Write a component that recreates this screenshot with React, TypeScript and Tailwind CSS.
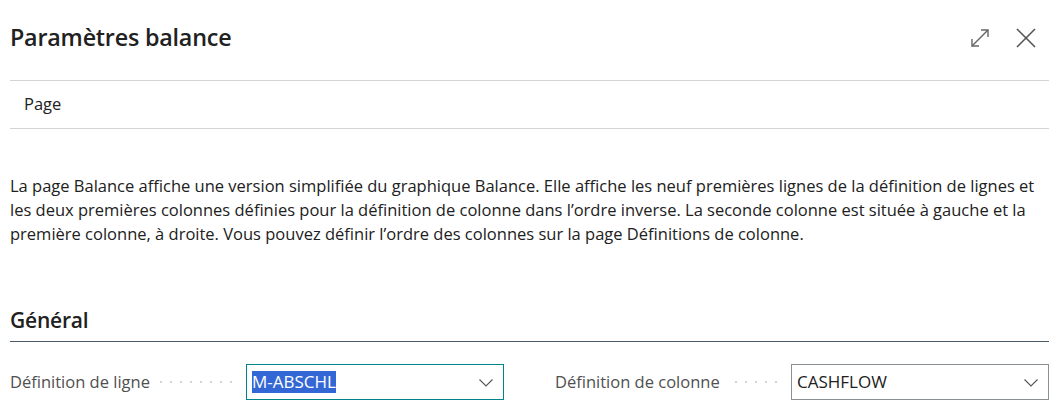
import React from 'react';

const font = "font-['Open_Sans','Noto_Sans',sans-serif]";

const ExpandIcon: React.FC = () => (
  <svg width="22" height="22" viewBox="0 0 22 22" fill="none" stroke="#666" strokeWidth="1.4">
    <path d="M3 19 L19 3" />
    <path d="M12 3 H19 V10" />
    <path d="M3 12 V19 H10" />
  </svg>
);

const CloseIcon: React.FC = () => (
  <svg width="22" height="22" viewBox="0 0 22 22" fill="none" stroke="#555" strokeWidth="1.6">
    <path d="M2 2 L20 20" />
    <path d="M20 2 L2 20" />
  </svg>
);

const Chevron: React.FC = () => (
  <svg width="16" height="9" viewBox="0 0 16 9" fill="none" stroke="#555" strokeWidth="1.1">
    <path d="M1.5 1.5 L8 8 L14.5 1.5" />
  </svg>
);

interface FieldProps {
  label: string;
  value: string;
  dots: number;
  focused?: boolean;
}

const Field: React.FC<FieldProps> = ({ label, value, dots, focused }) => (
  <div className="flex items-center w-[494px] shrink-0">
    <div className="w-[236px] flex items-center">
      <span className="text-[16.5px] text-[#505050] whitespace-nowrap">{label}</span>
      <div className="flex-1 flex justify-end gap-[8px] pr-[14px]">
        {Array.from({ length: dots }).map((_, i) => (
          <span key={i} className="w-[2px] h-[2px] rounded-full bg-[#c4c4c4]" />
        ))}
      </div>
    </div>
    <div
      className={
        focused
          ? 'flex-1 h-[36px] border border-[#008489] flex items-center justify-between pl-[5px] pr-[9px]'
          : 'flex-1 h-[36px] border border-[#8a8f94] flex items-center justify-between pl-[5px] pr-[9px]'
      }
    >
      <span
        className={
          focused
            ? 'text-[17px] leading-[22px] bg-[#3367d6] text-white'
            : 'text-[17px] leading-[22px] text-[#212121]'
        }
      >
        {value}
      </span>
      <Chevron />
    </div>
  </div>
);

export default function App() {
  return (
    <div className={`w-[1049px] h-[418px] bg-white overflow-hidden pl-[10px] ${font}`}>
      <div className="h-[81px] border-b border-[#d4d4d4] flex items-center justify-between pb-[6px] pr-[12px]">
        <h1 className="text-[23.3px] font-semibold text-[#212121] tracking-[-0.2px]">Paramètres balance</h1>
        <div className="flex items-center gap-[24px] pt-[2px]">
          <ExpandIcon />
          <CloseIcon />
        </div>
      </div>
      <div className="h-[48px] border-b border-[#d4d4d4] flex items-center pl-[14px]">
        <span className="text-[16.5px] text-[#212121]">Page</span>
      </div>
      <p className="mt-[45px] text-[16.5px] leading-[24px] text-[#212121] whitespace-nowrap">
        La page Balance affiche une version simplifiée du graphique Balance. Elle affiche les neuf premières lignes de la définition de lignes et
        <br />
        les deux premières colonnes définies pour la définition de colonne dans l’ordre inverse. La seconde colonne est située à gauche et la
        <br />
        première colonne, à droite. Vous pouvez définir l’ordre des colonnes sur la page Définitions de colonne.
      </p>
      <div className="mt-[60px] h-[36px] border-b border-[#4b5a66] flex items-start">
        <h2 className="text-[21px] font-semibold text-[#212121] leading-[28px] tracking-[-0.2px]">Général</h2>
      </div>
      <div className="mt-[22px] flex gap-[51px]">
        <Field label="Définition de ligne" value="M-ABSCHL" dots={8} focused />
        <Field label="Définition de colonne" value="CASHFLOW" dots={5} />
      </div>
    </div>
  );
}
